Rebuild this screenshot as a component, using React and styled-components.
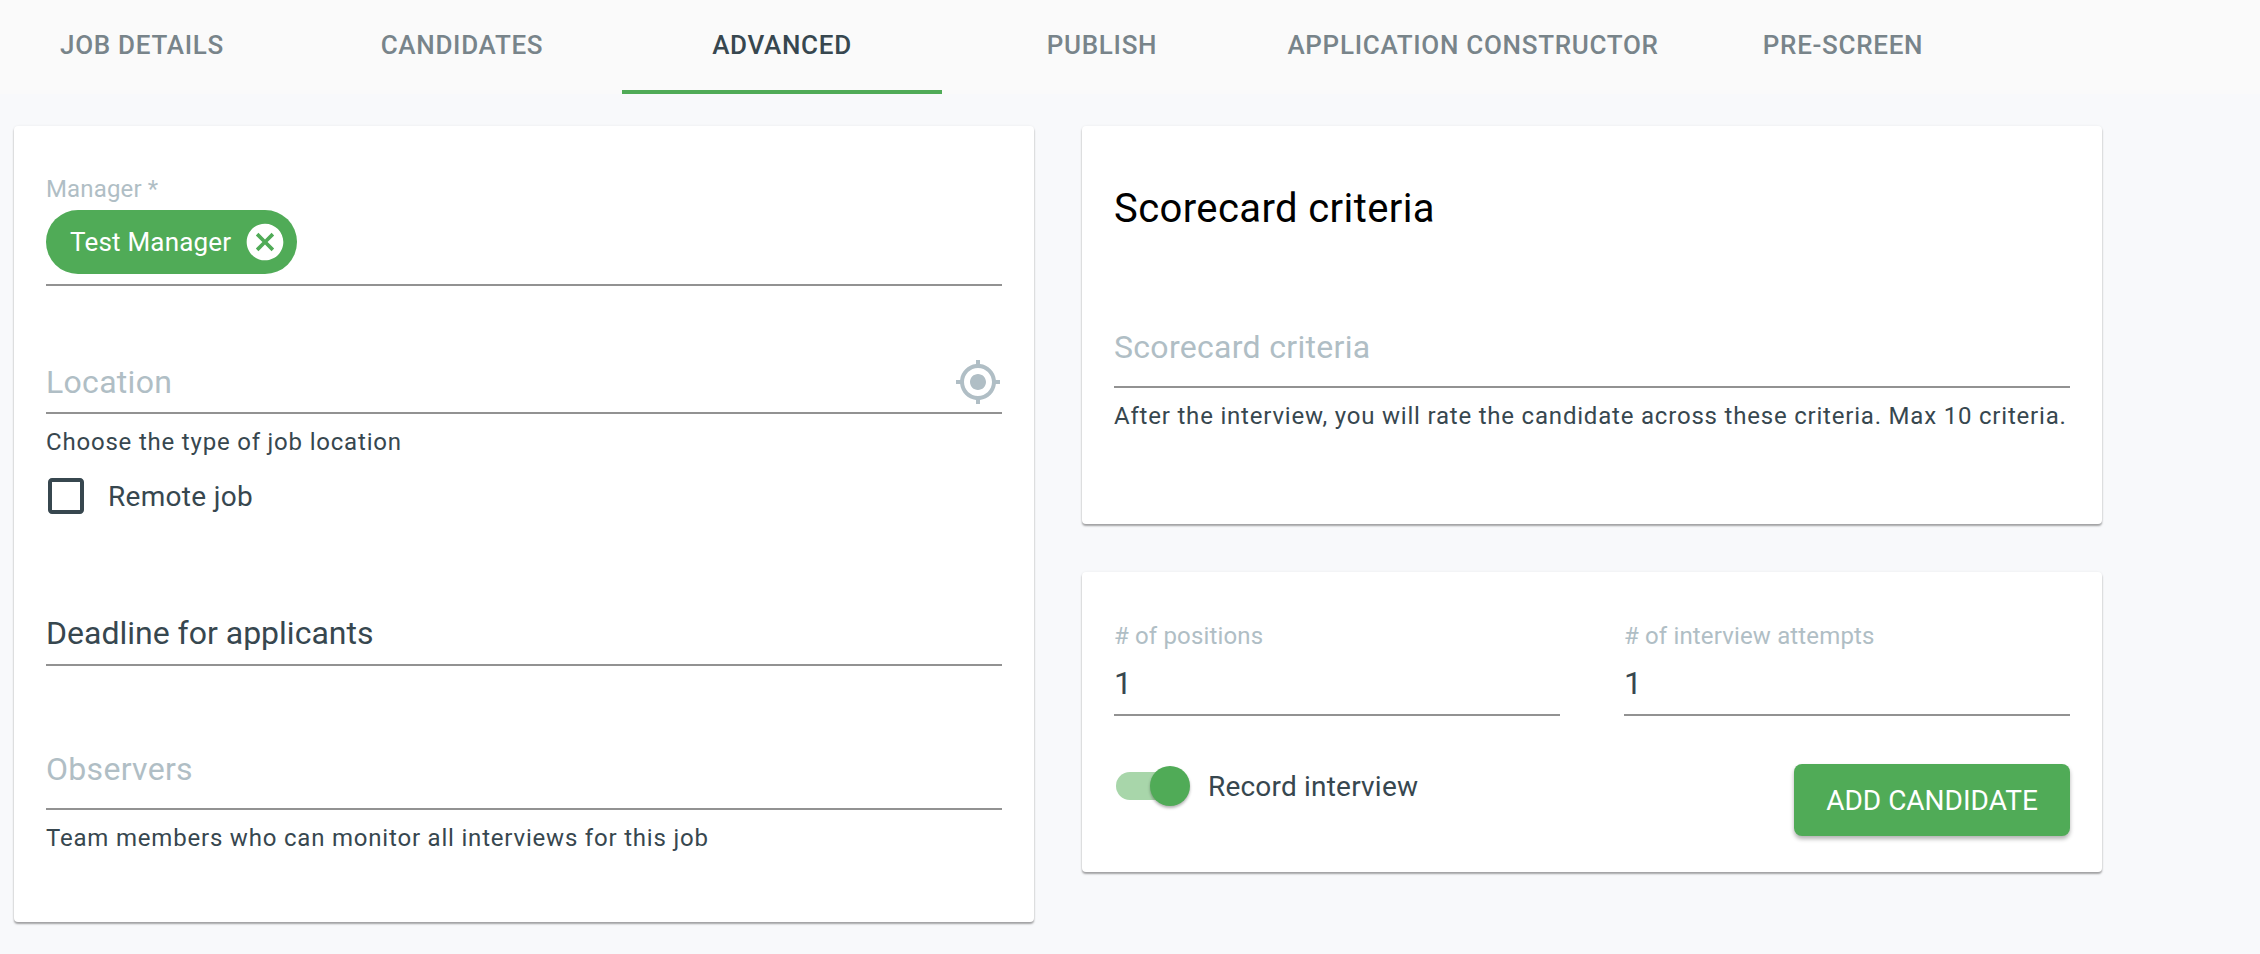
import React from "react"
import styled, { createGlobalStyle } from "styled-components"

const GlobalStyle = createGlobalStyle`
    html, body {
        margin: 0;
        padding: 0;
        background: #f8f9fb;
        font-family: Roboto, "Liberation Sans", sans-serif;
        color: #37474f;
    }
`

const Page = styled.div`
    width: 2260px;
    height: 954px;
    overflow: hidden;
`

const TabBar = styled.nav`
    display: flex;
    height: 94px;
    padding-left: 0;
    background: #fafafa;
`

const Tab = styled.div`
    box-sizing: border-box;
    flex: none;
    width: ${(p) => p.$width || 320}px;
    margin-left: ${(p) => p.$shift || 0}px;
    height: 94px;
    padding-top: 27px;
    line-height: 36px;
    text-align: center;
    font-size: 26px;
    font-weight: 500;
    letter-spacing: 0.7px;
    color: ${(p) => (p.$active ? "#37474f" : "#78848a")};
    border-bottom: 4px solid ${(p) => (p.$active ? "#50ab57" : "transparent")};
`

const Content = styled.main`
    display: flex;
    align-items: flex-start;
    gap: 48px;
    padding: 32px 0 0 14px;
`

const Card = styled.section`
    box-sizing: border-box;
    width: 1020px;
    height: ${(p) => p.$height}px;
    padding: 0 32px;
    background: #fff;
    border-radius: 4px;
    box-shadow: 0 2px 2px rgba(0, 0, 0, 0.34), 0 0 3px rgba(0, 0, 0, 0.06);
`

const Column = styled.div`
    display: flex;
    flex-direction: column;
    gap: 48px;
`

const SmallLabel = styled.label`
    display: block;
    margin-top: ${(p) => p.$top || 0}px;
    font-size: 24px;
    line-height: 26px;
    letter-spacing: 0.15px;
    color: #b0bec5;
`

const ChipField = styled.div`
    margin-top: 8px;
    padding-bottom: 10px;
    border-bottom: 2px solid #929292;
`

const Chip = styled.div`
    display: inline-flex;
    align-items: center;
    height: 64px;
    border-radius: 32px;
    background: #50ab57;
    color: #fff;
    font-size: 26px;
    letter-spacing: 0.2px;
    svg {
        width: 44px;
        height: 44px;
        margin: 0 10px 0 -12px;
        fill: #fff;
    }
`

const ChipLabel = styled.span`
    padding: 0 24px;
`

const InputRow = styled.div`
    display: flex;
    align-items: center;
    justify-content: space-between;
    margin-top: ${(p) => p.$top || 0}px;
    padding-bottom: ${(p) => p.$pad}px;
    height: 40px;
    font-size: 32px;
    line-height: 40px;
    letter-spacing: ${(p) => (p.$empty ? "0.3px" : "0")};
    color: ${(p) => (p.$empty ? "#b0bec5" : "#37474f")};
    border-bottom: 2px solid #929292;
    box-sizing: content-box;
`

const LocationIcon = styled.svg`
    width: 48px;
    height: 48px;
    fill: #b0bec5;
`

const Helper = styled.p`
    margin: ${(p) => p.$top || 14}px 0 0;
    font-size: 24px;
    line-height: 28px;
    letter-spacing: 0.8px;
    color: #37474f;
`

const CheckRow = styled.label`
    display: flex;
    align-items: center;
    height: 48px;
    margin: 16px 0 0 -4px;
    gap: 18px;
    font-size: 28px;
    letter-spacing: 0.3px;
    svg {
        width: 48px;
        height: 48px;
        fill: #37474f;
    }
`

const CardTitle = styled.h2`
    margin: 0;
    padding-top: 60px;
    font-size: 40px;
    line-height: 46px;
    font-weight: 400;
    letter-spacing: 0.4px;
    color: #000;
`

const NumberRow = styled.div`
    display: grid;
    grid-template-columns: 446px 446px;
    justify-content: space-between;
    padding-top: 51px;
`

const ActionRow = styled.div`
    display: flex;
    justify-content: space-between;
    margin-top: 48px;
`

const SwitchRow = styled.div`
    display: flex;
    align-items: center;
    gap: 18px;
    height: 40px;
    margin: 2px 0 0 2px;
    font-size: 28px;
    letter-spacing: 0.2px;
`

const SwitchTrack = styled.div`
    position: relative;
    width: 68px;
    height: 28px;
    margin-right: 6px;
    border-radius: 14px;
    background: #a8d6aa;
`

const SwitchThumb = styled.span`
    position: absolute;
    top: -6px;
    right: -6px;
    width: 40px;
    height: 40px;
    border-radius: 50%;
    background: #50ab57;
    box-shadow: 0 2px 3px rgba(0, 0, 0, 0.3);
`

const AddButton = styled.button`
    width: 276px;
    height: 72px;
    padding: 0;
    border: none;
    border-radius: 8px;
    background: #50ab57;
    color: #fff;
    font-family: inherit;
    font-size: 28px;
    letter-spacing: 0;
    box-shadow: 0 3px 4px rgba(0, 0, 0, 0.3);
`

const App = () => {
    return (
        <Page>
            <GlobalStyle />
            <TabBar>
                <Tab $shift={-18}>JOB DETAILS</Tab>
                <Tab>CANDIDATES</Tab>
                <Tab $active>ADVANCED</Tab>
                <Tab>PUBLISH</Tab>
                <Tab $width={422}>APPLICATION CONSTRUCTOR</Tab>
                <Tab $width={318}>PRE-SCREEN</Tab>
            </TabBar>
            <Content>
                <Card $height={796}>
                    <SmallLabel $top={50}>Manager *</SmallLabel>
                    <ChipField>
                        <Chip>
                            <ChipLabel>Test Manager</ChipLabel>
                            <svg viewBox="0 0 24 24">
                                <path d="M12 2C6.47 2 2 6.47 2 12s4.47 10 10 10 10-4.47 10-10S17.53 2 12 2zm5 13.59L15.59 17 12 13.41 8.41 17 7 15.59 10.59 12 7 8.41 8.41 7 12 10.59 15.59 7 17 8.41 13.41 12 17 15.59z" />
                            </svg>
                        </Chip>
                    </ChipField>
                    <InputRow $top={76} $pad={10} $empty>
                        Location
                        <LocationIcon viewBox="0 0 24 24">
                            <path d="M12 8c-2.21 0-4 1.79-4 4s1.79 4 4 4 4-1.79 4-4-1.79-4-4-4zm8.94 3c-.46-4.17-3.77-7.48-7.94-7.94V1h-2v2.06C6.83 3.52 3.52 6.83 3.06 11H1v2h2.06c.46 4.17 3.77 7.48 7.94 7.94V23h2v-2.06c4.17-.46 7.48-3.77 7.94-7.94H23v-2h-2.06zM12 19c-3.87 0-7-3.13-7-7s3.13-7 7-7 7 3.13 7 7-3.13 7-7 7z" />
                        </LocationIcon>
                    </InputRow>
                    <Helper>Choose the type of job location</Helper>
                    <CheckRow>
                        <svg viewBox="0 0 24 24">
                            <path d="M19 5v14H5V5h14m0-2H5c-1.1 0-2 .9-2 2v14c0 1.1.9 2 2 2h14c1.1 0 2-.9 2-2V5c0-1.1-.9-2-2-2z" />
                        </svg>
                        Remote job
                    </CheckRow>
                    <InputRow $top={93} $pad={11}>
                        Deadline for applicants
                    </InputRow>
                    <InputRow $top={83} $pad={19} $empty>
                        Observers
                    </InputRow>
                    <Helper>Team members who can monitor all interviews for this job</Helper>
                </Card>
                <Column>
                    <Card $height={398}>
                        <CardTitle>Scorecard criteria</CardTitle>
                        <InputRow $top={95} $pad={19} $empty>
                            Scorecard criteria
                        </InputRow>
                        <Helper>After the interview, you will rate the candidate across these criteria. Max 10 criteria.</Helper>
                    </Card>
                    <Card $height={300}>
                        <NumberRow>
                            <div>
                                <SmallLabel>&#35; of positions</SmallLabel>
                                <InputRow $top={14} $pad={11}>1</InputRow>
                            </div>
                            <div>
                                <SmallLabel>&#35; of interview attempts</SmallLabel>
                                <InputRow $top={14} $pad={11}>1</InputRow>
                            </div>
                        </NumberRow>
                        <ActionRow>
                            <SwitchRow>
                                <SwitchTrack>
                                    <SwitchThumb />
                                </SwitchTrack>
                                Record interview
                            </SwitchRow>
                            <AddButton>ADD CANDIDATE</AddButton>
                        </ActionRow>
                    </Card>
                </Column>
            </Content>
        </Page>
    )
}

export default App
